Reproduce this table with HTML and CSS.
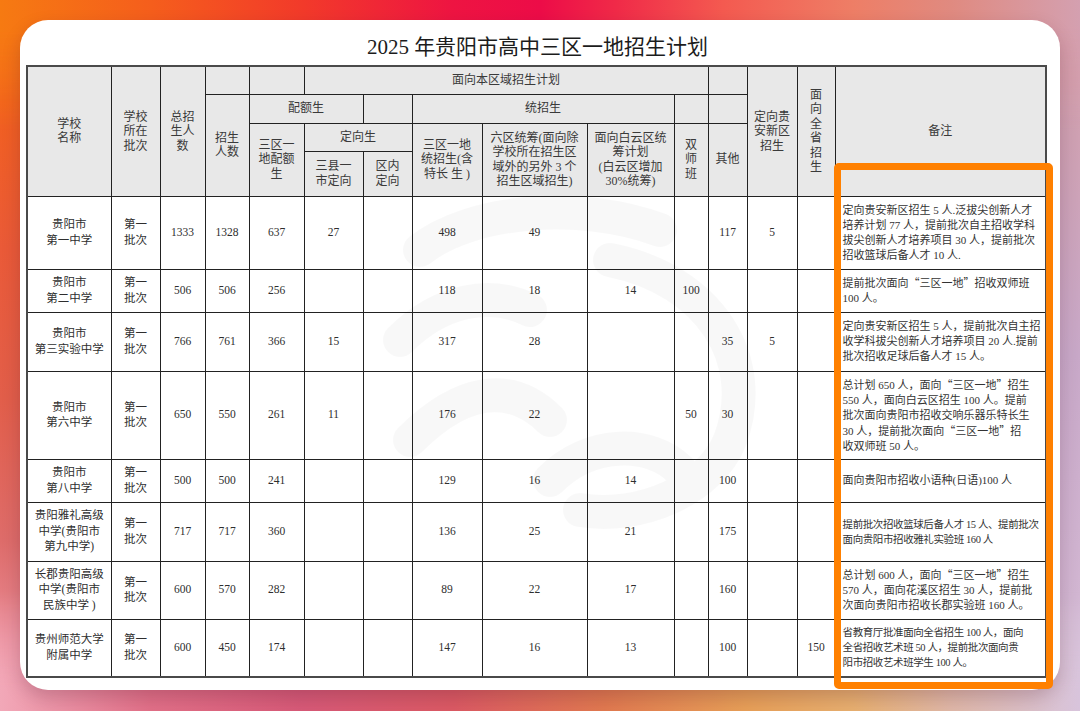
FILE: index.html
```html
<!DOCTYPE html>
<html lang="zh-CN">
<head>
<meta charset="utf-8">
<title>2025 年贵阳市高中三区一地招生计划</title>
<link rel="stylesheet" href="styles.css">
</head>
<body>
<div class="page">
  <div class="card">
    <h1 class="title">2025 年贵阳市高中三区一地招生计划</h1>
    <table class="plan">
      <colgroup>
        <col class="c-name"><col class="c-batch"><col class="c-total"><col class="c-enrol">
        <col class="c-quota"><col class="c-county"><col class="c-inner"><col class="c-unified">
        <col class="c-six"><col class="c-baiyun"><col class="c-dual"><col class="c-other">
        <col class="c-guian"><col class="c-prov"><col class="c-note">
      </colgroup>
      <thead>
        <tr class="hr1">
          <th rowspan="4">学校<br>名称</th>
          <th rowspan="4">学校<br>所在<br>批次</th>
          <th rowspan="4">总招<br>生人<br>数</th>
          <th></th>
          <th></th>
          <th colspan="6">面向本区域招生计划</th>
          <th></th>
          <th rowspan="4">定向贵<br>安新区<br>招生</th>
          <th rowspan="4">面<br>向<br>全<br>省<br>招<br>生</th>
          <th rowspan="4">备注</th>
        </tr>
        <tr class="hr2">
          <th rowspan="3">招生<br>人数</th>
          <th colspan="2">配额生</th>
          <th></th>
          <th colspan="3">统招生</th>
          <th></th>
          <th></th>
        </tr>
        <tr class="hr3">
          <th rowspan="2">三区一<br>地配额<br>生</th>
          <th colspan="2">定向生</th>
          <th rowspan="2">三区一地<br>统招生(含<br>特长 生 )</th>
          <th rowspan="2">六区统筹(面向除<br>学校所在招生区<br>域外的另外 3 个<br>招生区域招生)</th>
          <th rowspan="2">面向白云区统<br>筹计划<br>(白云区增加<br>30%统筹)</th>
          <th rowspan="2">双<br>师<br>班</th>
          <th rowspan="2">其他</th>
        </tr>
        <tr class="hr4">
          <th>三县一<br>市定向</th>
          <th>区内<br>定向</th>
        </tr>
      </thead>
      <tbody>
        <tr class="r1">
          <td>贵阳市<br>第一中学</td><td>第一<br>批次</td><td>1333</td><td>1328</td><td>637</td><td>27</td><td></td><td>498</td><td>49</td><td></td><td></td><td>117</td><td>5</td><td></td>
          <td class="note">定向贵安新区招生 5 人.泛拔尖创新人才<br>培养计划 77 人，提前批次自主招收学科<br>拔尖创新人才培养项目 30 人，提前批次<br>招收篮球后备人才 10 人.</td>
        </tr>
        <tr class="r2">
          <td>贵阳市<br>第二中学</td><td>第一<br>批次</td><td>506</td><td>506</td><td>256</td><td></td><td></td><td>118</td><td>18</td><td>14</td><td>100</td><td></td><td></td><td></td>
          <td class="note">提前批次面向<span class="q">“</span>三区一地<span class="q">”</span>招收双师班<br>100 人。</td>
        </tr>
        <tr class="r3">
          <td>贵阳市<br>第三实验中学</td><td>第一<br>批次</td><td>766</td><td>761</td><td>366</td><td>15</td><td></td><td>317</td><td>28</td><td></td><td></td><td>35</td><td>5</td><td></td>
          <td class="note">定向贵安新区招生 5 人，提前批次自主招<br>收学科拔尖创新人才培养项目 20 人.提前<br>批次招收足球后备人才 15 人。</td>
        </tr>
        <tr class="r4">
          <td>贵阳市<br>第六中学</td><td>第一<br>批次</td><td>650</td><td>550</td><td>261</td><td>11</td><td></td><td>176</td><td>22</td><td></td><td>50</td><td>30</td><td></td><td></td>
          <td class="note">总计划 650 人，面向<span class="q">“</span>三区一地<span class="q">”</span>招生<br>550 人，面向白云区招生 100 人。提前<br>批次面向贵阳市招收交响乐器乐特长生<br>30 人，提前批次面向<span class="q">“</span>三区一地<span class="q">”</span>招<br>收双师班 50 人。</td>
        </tr>
        <tr class="r5">
          <td>贵阳市<br>第八中学</td><td>第一<br>批次</td><td>500</td><td>500</td><td>241</td><td></td><td></td><td>129</td><td>16</td><td>14</td><td></td><td>100</td><td></td><td></td>
          <td class="note">面向贵阳市招收小语种(日语)100 人</td>
        </tr>
        <tr class="r6">
          <td>贵阳雅礼高级<br>中学(贵阳市<br>第九中学)</td><td>第一<br>批次</td><td>717</td><td>717</td><td>360</td><td></td><td></td><td>136</td><td>25</td><td>21</td><td></td><td>175</td><td></td><td></td>
          <td class="note tight">提前批次招收篮球后备人才 15 人、提前批次<br>面向贵阳市招收雅礼实验班 160 人</td>
        </tr>
        <tr class="r7">
          <td>长郡贵阳高级<br>中学(贵阳市<br>民族中学 )</td><td>第一<br>批次</td><td>600</td><td>570</td><td>282</td><td></td><td></td><td>89</td><td>22</td><td>17</td><td></td><td>160</td><td></td><td></td>
          <td class="note">总计划 600 人，面向<span class="q">“</span>三区一地<span class="q">”</span>招生<br>570 人，面向花溪区招生 30 人，提前批<br>次面向贵阳市招收长郡实验班 160 人。</td>
        </tr>
        <tr class="r8">
          <td>贵州师范大学<br>附属中学</td><td>第一<br>批次</td><td>600</td><td>450</td><td>174</td><td></td><td></td><td>147</td><td>16</td><td>13</td><td></td><td>100</td><td></td><td>150</td>
          <td class="note tight">省教育厅批准面向全省招生 100 人，面向<br>全省招收艺术班 50 人，提前批次面向贵<br>阳市招收艺术班学生 100 人。</td>
        </tr>
      </tbody>
    </table>
    <svg class="watermark" width="420" height="360" viewBox="0 0 420 360" aria-hidden="true">
      <path d="M40 60 C 90 20, 200 10, 280 40" />
      <path d="M20 150 C 60 110, 110 100, 150 120" />
      <path d="M30 250 C 80 200, 130 190, 170 230" />
      <path d="M230 70 C 330 90, 380 170, 350 250 C 330 300, 260 330, 200 320" />
      <path d="M170 290 C 210 250, 270 250, 300 280" />
    </svg>
    <div class="highlight"></div>
  </div>
</div>
</body>
</html>
```

FILE: styles.css
```css
html, body {
  margin: 0;
  padding: 0;
}

body {
  width: 1080px;
  height: 711px;
  overflow: hidden;
  position: relative;
  font-family: "Liberation Serif", "Noto Sans CJK SC", serif;
  color: #333;
  background:
    linear-gradient(to bottom, #f6761a 0%, #f2601f 14%, #ea5a38 35%, #e25e4a 56%, #de6c6a 76%, #ea8c98 91%, #f2a8b8 100%) left top / 80px 100% no-repeat,
    linear-gradient(to bottom, #d8949c 0%, #d0a0b0 15%, #c8a8c8 50%, #d2b6d2 84%, #dcc8dc 100%) right top / 80px 100% no-repeat,
    #e0787a;
}

body::before,
body::after {
  content: "";
  position: absolute;
  left: 0;
  right: 0;
  pointer-events: none;
}

body::before {
  top: 0;
  height: 140px;
  background: linear-gradient(to right, #f67a12 0%, #f55e1c 14%, #f23a2a 28%, #ee1442 42%, #ed0c48 50%, #f02a48 57%, #f45a50 67%, #ee7e66 79%, #e08a80 88%, #d4a0b0 100%);
  -webkit-mask-image: linear-gradient(to bottom, #000 0, #000 26px, transparent 130px);
  mask-image: linear-gradient(to bottom, #000 0, #000 26px, transparent 130px);
}

body::after {
  bottom: 0;
  height: 130px;
  background: linear-gradient(to right, #f2a8b8 0%, #e27088 14%, #d85a78 28%, #dc5a64 42%, #e27a50 56%, #e8a058 69%, #e8b070 79%, #e0b8a8 88%, #d8c4dc 100%);
  -webkit-mask-image: linear-gradient(to top, #000 0, #000 22px, transparent 120px);
  mask-image: linear-gradient(to top, #000 0, #000 22px, transparent 120px);
}

.page {
  position: relative;
  z-index: 1;
  padding: 20px;
  box-sizing: border-box;
  height: 711px;
}

.card {
  position: relative;
  height: 670px;
  box-sizing: border-box;
  padding: 0 13px 0 8px;
  background: #fff;
  border-radius: 28px;
  box-shadow: 0 8px 18px rgba(70, 20, 40, 0.22);
}

.title {
  margin: 0;
  height: 45px;
  box-sizing: border-box;
  padding-top: 4px;
  display: flex;
  align-items: center;
  justify-content: center;
  font-size: 21px;
  font-weight: normal;
  color: #1c1c1c;
}

.plan {
  width: 1019px;
  margin-left: -2px;
  table-layout: fixed;
  border-collapse: collapse;
  border: 2px solid #4a4a4a;
}

.c-name { width: 84px; }
.c-batch { width: 49px; }
.c-total { width: 45px; }
.c-enrol { width: 44px; }
.c-quota { width: 55px; }
.c-county { width: 59px; }
.c-inner { width: 49px; }
.c-unified { width: 70px; }
.c-six { width: 105px; }
.c-baiyun { width: 87px; }
.c-dual { width: 34px; }
.c-other { width: 39px; }
.c-guian { width: 50px; }
.c-prov { width: 38px; }
.c-note { width: 211px; }

.plan th,
.plan td {
  border: 1px solid #222;
  padding: 0 2px;
  text-align: center;
  vertical-align: middle;
  overflow: hidden;
  white-space: nowrap;
}

.plan th {
  background: #e8e8e8;
  font-weight: normal;
  font-size: 12px;
  line-height: 14.5px;
  color: #3a3a3a;
}

.plan td {
  background: transparent;
  font-size: 11.5px;
  line-height: 15.5px;
  color: #2e2e2e;
}

.hr1 { height: 28px; }
.hr2 { height: 29px; }
.hr3 { height: 28px; }
.hr4 { height: 45px; }

.r1 { height: 73px; }
.r2 { height: 43px; }
.r3 { height: 59px; }
.r4 { height: 88px; }
.r5 { height: 43px; }
.r6 { height: 59px; }
.r7 { height: 58px; }
.r8 { height: 58px; }

.plan td.note {
  text-align: left;
  padding: 0 0 0 7px;
  font-size: 11px;
  line-height: 15px;
  color: #333;
}

.plan td.note.tight {
  font-size: 10.5px;
  letter-spacing: -0.4px;
}

.q {
  font-family: "Noto Sans CJK SC", sans-serif;
}

.watermark {
  position: absolute;
  left: 360px;
  top: 170px;
  pointer-events: none;
  fill: none;
  stroke: #000;
  stroke-width: 34;
  stroke-linecap: round;
  opacity: 0.022;
}

.highlight {
  position: absolute;
  left: 814px;
  top: 143px;
  width: 219px;
  height: 526px;
  box-sizing: border-box;
  border: 7px solid #ff8000;
  border-radius: 5px;
  pointer-events: none;
}
```
